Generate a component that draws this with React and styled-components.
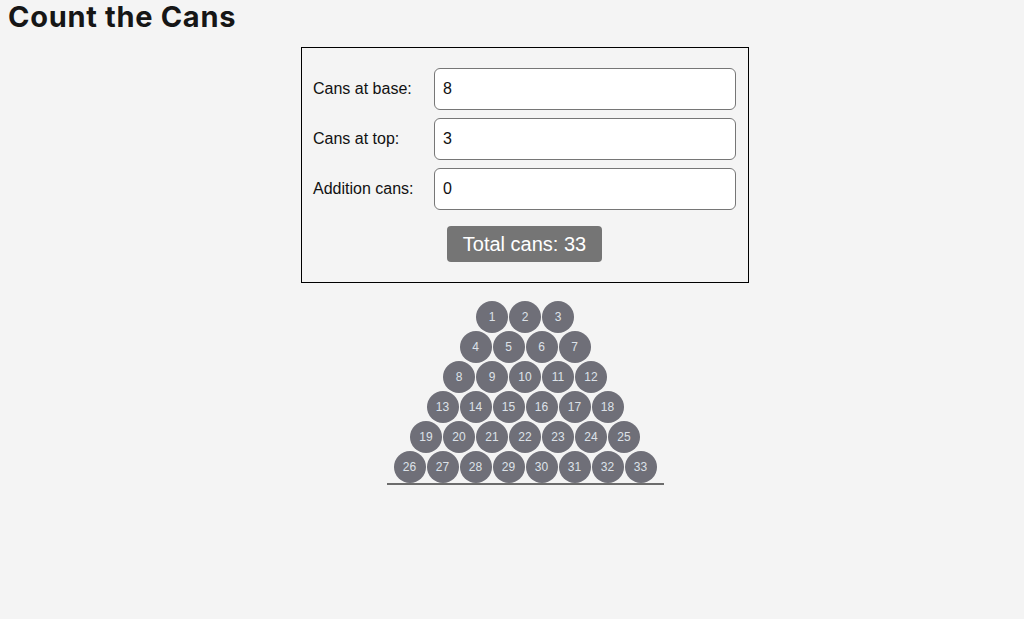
import React, { useState } from 'react';
import styled, { createGlobalStyle } from 'styled-components';

const GlobalStyle = createGlobalStyle`
  body {
    margin: 0;
    background: #f4f4f4;
    font-family: "Liberation Sans", Arial, sans-serif;
    color: #111;
  }
`;

const Page = styled.div`
  padding: 0 8px;
`;

const Title = styled.h1`
  margin: 0;
  font-family: Inter, "Liberation Sans", sans-serif;
  font-size: 29px;
  font-weight: 700;
  line-height: 34px;
  letter-spacing: 0.7px;
  color: #161616;
`;

const Content = styled.div`
  padding-left: 26px;
  display: flex;
  flex-direction: column;
  align-items: center;
`;

const Form = styled.div`
  margin-top: 13px;
  width: 448px;
  box-sizing: border-box;
  border: 1px solid #000;
  padding: 20px 12px 20px 11px;
  display: flex;
  flex-direction: column;
  gap: 8px;
`;

const Row = styled.label`
  display: grid;
  grid-template-columns: 121px 1fr;
  align-items: center;
  font-size: 16px;
`;

const Input = styled.input`
  height: 42px;
  box-sizing: border-box;
  border: 1px solid #767676;
  border-radius: 6px;
  background: #fff;
  padding: 0 8px;
  font-family: "Liberation Sans", Arial, sans-serif;
  font-size: 16px;
  color: #111;
  outline: none;
`;

const Total = styled.div`
  align-self: center;
  margin-top: 8px;
  background: #757575;
  color: #fff;
  border-radius: 4px;
  height: 36px;
  padding: 0 16px;
  display: flex;
  align-items: center;
  font-size: 20px;
`;

const Pyramid = styled.div`
  margin-top: 18px;
  padding: 0 7px;
  border-bottom: 2px solid #6c6c6c;
  display: flex;
  flex-direction: column;
  align-items: center;
`;

const CanRow = styled.div`
  display: flex;
  gap: 1px;
  margin-top: ${(p) => (p.$first ? '0' : '-2px')};
`;

const Can = styled.div`
  width: 32px;
  height: 32px;
  border-radius: 50%;
  background: #6f6f78;
  color: #dde2e8;
  font-size: 12px;
  display: flex;
  align-items: center;
  justify-content: center;
`;

export default function App() {
  const [base, setBase] = useState('8');
  const [top, setTop] = useState('3');
  const [extra, setExtra] = useState('0');

  const b = parseInt(base, 10) || 0;
  const t = parseInt(top, 10) || 0;
  const rows = [];
  let n = 0;
  for (let w = t; w <= b && w > 0; w += 1) {
    const cans = [];
    for (let i = 0; i < w; i += 1) {
      n += 1;
      cans.push(n);
    }
    rows.push(cans);
  }
  const total = n + (parseInt(extra, 10) || 0);

  return (
    <Page>
      <GlobalStyle />
      <Title>Count the Cans</Title>
      <Content>
        <Form>
          <Row>
            Cans at base:
            <Input value={base} onChange={(e) => setBase(e.target.value)} />
          </Row>
          <Row>
            Cans at top:
            <Input value={top} onChange={(e) => setTop(e.target.value)} />
          </Row>
          <Row>
            Addition cans:
            <Input value={extra} onChange={(e) => setExtra(e.target.value)} />
          </Row>
          <Total>Total cans: {total}</Total>
        </Form>
        <Pyramid>
          {rows.map((cans, idx) => (
            <CanRow key={cans[0]} $first={idx === 0}>
              {cans.map((c) => <Can key={c}>{c}</Can>)}
            </CanRow>
          ))}
        </Pyramid>
      </Content>
    </Page>
  );
}
